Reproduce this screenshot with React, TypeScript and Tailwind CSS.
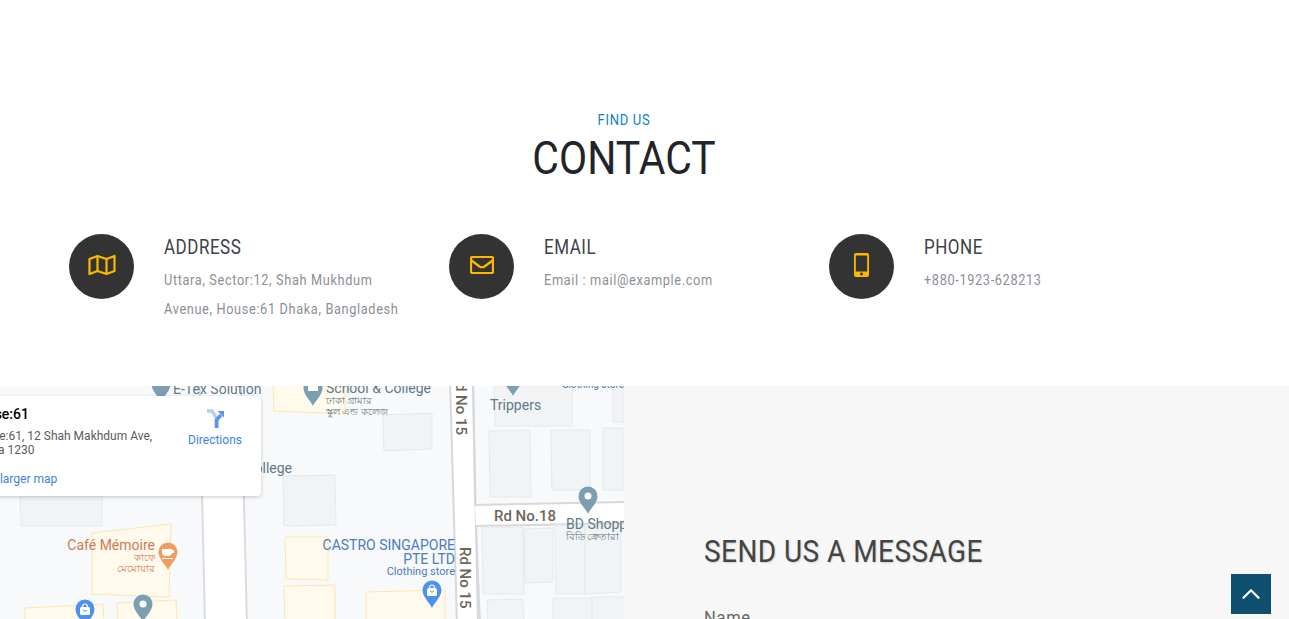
import { ChevronUp } from "lucide-react";
import type { ReactNode } from "react";

const slate = "#7b9eb0";

function Pin({ x, y, color, children }: { x: number; y: number; color: string; children?: ReactNode }) {
  // x,y = centre of pin head
  return (
    <g>
      <path
        d={`M${x} ${y + 18} C${x - 2} ${y + 13} ${x - 9.5} ${y + 7} ${x - 9.5} ${y} A9.5 9.5 0 1 1 ${x + 9.5} ${y} C${x + 9.5} ${y + 7} ${x + 2} ${y + 13} ${x} ${y + 18}Z`}
        fill={color}
      />
      {children}
    </g>
  );
}

function ShopMark({ x, y }: { x: number; y: number }) {
  return (
    <g>
      <rect x={x - 5} y={y - 2} width={10} height={8} rx={1.5} fill="#fff" />
      <path d={`M${x - 2.5} ${y - 2} a2.5 3 0 0 1 5 0`} fill="none" stroke="#fff" strokeWidth={1.2} />
      <path d={`M${x - 2} ${y + 1} q2 2.5 4 0`} fill="none" stroke="#4d90f0" strokeWidth={1} />
    </g>
  );
}

const grey = [
  "20,496 102,496 102,526 21,526",
  "283,476 335,475 336,525 284,526",
  "383,415 432,413 432,449 384,451",
  "494,386 572,386 572,426 495,426",
  "489,431 530,430 531,497 490,497",
  "551,430 590,430 590,490 552,490",
  "603,428 624,428 624,490 603,490",
  "613,386 624,386 624,422 613,422",
  "482,527 523,527 524,594 483,594",
  "524,529 553,528 553,582 525,583",
  "555,525 585,525 585,594 556,594",
  "585,525 621,525 621,592 585,594",
  "487,600 523,599 524,625 488,625",
  "553,598 592,598 592,625 553,625",
  "592,597 630,597 630,625 592,625",
];

const yellow = [
  "273,380 345,380 345,414 274,411",
  "92,533 171,524 169,597 92,594",
  "25,608 103,604 104,625 25,625",
  "117,603 176,600 177,625 118,625",
  "285,537 328,537 328,580 286,579",
  "284,586 335,585 335,625 285,625",
  "366,592 445,590 445,625 366,625",
];

function MapView() {
  return (
    <div className="relative w-[624px] h-[233px] overflow-hidden bg-[#f8f9fa] shrink-0">
      <svg viewBox="0 386 624 233" className="block w-full h-full" style={{ fontFamily: "Roboto, 'Noto Sans', sans-serif" }}>
        {/* roads */}
        <path d="M199.5 380 L241 380 L247 625 L205 625Z" fill="#fff" stroke="#d9dce0" strokeWidth="2" />
        <path d="M450 380 L473 380 L478 625 L457 625Z" fill="#fff" stroke="#d5d8dc" strokeWidth="2" />
        <path d="M475 505 L624 502 L624 523 L476 526Z" fill="#fff" />
        <path d="M473 380 L475 505 L630 502 M476 526 L480 625 M476 526 L630 523" fill="none" stroke="#d5d8dc" strokeWidth="2" />

        {grey.map((p) => (
          <polygon key={p} points={p} fill="#f1f3f4" stroke="#e6e8ea" />
        ))}
        {yellow.map((p) => (
          <polygon key={p} points={p} fill="#fffaec" stroke="#fde7b0" />
        ))}

        <Pin x={161} y={384} color={slate} />
        <Pin x={313} y={388} color={slate}>
          <rect x={308} y={385} width={10} height={6} fill="#fff" />
        </Pin>
        <Pin x={513} y={378} color={slate} />
        <Pin x={588} y={496} color={slate}>
          <circle cx={588} cy={496} r={3.5} fill="#fff" />
        </Pin>
        <Pin x={143} y={604} color={slate}>
          <circle cx={143} cy={604} r={3.5} fill="#fff" />
        </Pin>
        <Pin x={168} y={552} color="#f29b5e">
          <path d="M162 549 h10 v3 a4 4 0 0 1 -4 4 h-2 a4 4 0 0 1 -4 -4Z M172 550 h2 v3 h-2Z M162 558 h11 v1 h-11Z" fill="#fff" />
        </Pin>
        <Pin x={85} y={609} color="#4d90f0">
          <ShopMark x={85} y={609} />
        </Pin>
        <Pin x={432} y={590} color="#4d90f0">
          <ShopMark x={432} y={590} />
        </Pin>

        <text x={173} y={394} fontSize={14} fill="#5f7a88">E-Tex Solution</text>
        <text x={326} y={393} fontSize={14} fill="#5f7a88">School &amp; College</text>
        <text x={326} y={404} fontSize={10} fill="#5f7a88">ঢাকা গ্রামার</text>
        <text x={326} y={415} fontSize={10} fill="#5f7a88">স্কুল এন্ড কলেজ</text>
        <text x={292} y={473} fontSize={14} fill="#5f7a88" textAnchor="end">College</text>
        <text x={490} y={410} fontSize={14} fill="#5f7a88">Trippers</text>
        <text x={624} y={388} fontSize={10} fill="#4a7cc0" textAnchor="end">Clothing store</text>
        <text x={494} y={521} fontSize={15} fontWeight={500} fill="#6d675b">Rd No.18</text>
        <text x={566} y={529} fontSize={14} fill="#5f7a88">BD Shopper</text>
        <text x={566} y={540} fontSize={10} fill="#5f7a88">বিডি ক্রেতারা</text>
        <text x={155} y={550} fontSize={14} fill="#cf7a50" textAnchor="end">Café Mémoire</text>
        <text x={155} y={561} fontSize={10} fill="#cf7a50" textAnchor="end">কাফে</text>
        <text x={155} y={572} fontSize={10} fill="#cf7a50" textAnchor="end">মেমোয়ার</text>
        <text x={455} y={550} fontSize={14} fill="#4a7cc0" textAnchor="end">CASTRO SINGAPORE</text>
        <text x={455} y={564} fontSize={14} fill="#4a7cc0" textAnchor="end">PTE LTD</text>
        <text x={455} y={575} fontSize={11} fill="#4a7cc0" textAnchor="end">Clothing store</text>
        <text transform="translate(456 435) rotate(90)" fontSize={15} fontWeight={500} fill="#6d675b" textAnchor="end">Rd No 15</text>
        <text transform="translate(460 547) rotate(90)" fontSize={15} fontWeight={500} fill="#6d675b">Rd No 15</text>
      </svg>

      {/* info window */}
      <div className="absolute left-[-40px] top-[10px] w-[301px] h-[100px] bg-white rounded-sm shadow-[0_1px_4px_rgba(0,0,0,0.2)] whitespace-nowrap">
        <p className="absolute left-[9px] top-[8px] text-sm font-medium text-black leading-5">House:61</p>
        <p className="absolute left-[11px] top-[33px] text-xs text-[#5b5b5b] leading-[14px]">
          House:61, 12 Shah Makhdum Ave,
          <br />
          Dhaka 1230
        </p>
        <p className="absolute left-[11px] top-[76px] text-xs text-[#3a84df] leading-[15px]">View larger map</p>
        <div className="absolute left-[228px] top-[13px] w-[54px] flex flex-col items-center">
          <svg viewBox="0 0 20 20" className="w-5 h-5">
            <path d="M2 2 L7 2 L12 10 L12 19" fill="none" stroke="#b3d0f5" strokeWidth="3.4" />
            <path d="M11.5 19 L11.5 11 L16 6" fill="none" stroke="#5a95e8" strokeWidth="3.6" />
            <path d="M12.5 2 L19 2 L19 8.5Z" fill="#5a95e8" />
          </svg>
          <span className="text-xs text-[#3a84df] leading-[15px] mt-[4px]">Directions</span>
        </div>
      </div>
    </div>
  );
}

function MapIcon() {
  return (
    <svg viewBox="0 0 28 22" className="w-[28px] h-[22px]" fill="none" stroke="#ffb800" strokeWidth="2.2" strokeLinejoin="round">
      <path d="M1.5 5 L9.5 2 L18.5 5 L26.5 2 V17 L18.5 20 L9.5 17 L1.5 20Z" />
      <path d="M9.5 2 V17 M18.5 5 V20" />
    </svg>
  );
}

function MailIcon() {
  return (
    <svg viewBox="0 0 24 18" className="w-[24px] h-[18px]" fill="none" stroke="#ffb800" strokeWidth="2.2" strokeLinejoin="round">
      <rect x="1" y="1" width="22" height="16" rx="1.5" />
      <path d="M1.5 4.5 L9.5 10.5 Q12 12 14.5 10.5 L22.5 4.5" />
    </svg>
  );
}

function PhoneIcon() {
  return (
    <svg viewBox="0 0 15 24" className="w-[15px] h-[24px]">
      <rect x="0" y="0" width="15" height="24" rx="2" fill="#ffb800" />
      <rect x="1.8" y="2.5" width="11.4" height="16" fill="#333" />
      <circle cx="7.5" cy="21" r="1.4" fill="#333" />
    </svg>
  );
}

function InfoItem({ icon, title, lines }: { icon: ReactNode; title: string; lines: string[] }) {
  return (
    <div className="flex">
      <div className="w-[65px] h-[65px] pb-1 rounded-full bg-[#333333] flex items-center justify-center shrink-0">{icon}</div>
      <div className="ml-[30px]">
        <h3 className="text-[20px] leading-6 mt-[1px] tracking-[0.6px] text-[#3e4147] origin-left scale-x-[0.85]">{title}</h3>
        <div className="mt-[7px]">
          {lines.map((l) => (
            <p key={l} className="text-[15px] leading-[29px] tracking-[0.75px] text-[#8c8f96] whitespace-nowrap origin-left scale-x-[0.85]">
              {l}
            </p>
          ))}
        </div>
      </div>
    </div>
  );
}

export default function App() {
  return (
    <div className="relative h-[619px] overflow-hidden bg-white font-['Roboto',sans-serif]">
      <section className="h-[386px] pt-[111px]">
        <div className="w-[1248px] text-center">
          <p className="text-[15px] leading-[18px] tracking-[0.8px] text-[#0a84cc] scale-x-[0.87]">FIND US</p>
          <h2 className="text-[46px] leading-[58px] text-[#212529] scale-x-[0.89]">CONTACT</h2>
        </div>
        <div className="grid grid-cols-[380px_380px_380px] pl-[69px] mt-[47px]">
          <InfoItem
            icon={<MapIcon />}
            title="ADDRESS"
            lines={["Uttara, Sector:12, Shah Mukhdum", "Avenue, House:61 Dhaka, Bangladesh"]}
          />
          <InfoItem icon={<MailIcon />} title="EMAIL" lines={["Email : mail@example.com"]} />
          <InfoItem icon={<PhoneIcon />} title="PHONE" lines={["+880-1923-628213"]} />
        </div>
      </section>

      <section className="flex h-[233px]">
        <MapView />
        <div className="flex-1 bg-[#f7f7f7] pl-[80px] pt-[145px]">
          <h3 className="text-[32px] leading-10 tracking-[0.5px] text-[#444444] origin-left scale-x-[0.875] whitespace-nowrap [text-shadow:1px_1px_2px_rgba(0,0,0,0.15)]">SEND US A MESSAGE</h3>
          <p className="mt-[35px] text-[19px] leading-6 tracking-[0.8px] text-[#666666] origin-left scale-x-[0.87]">Name</p>
        </div>
      </section>

      <button className="absolute left-[1231px] top-[574px] w-10 h-10 bg-[#0f5070] flex items-center justify-center text-white">
        <ChevronUp size={30} strokeWidth={1.8} />
      </button>
    </div>
  );
}
